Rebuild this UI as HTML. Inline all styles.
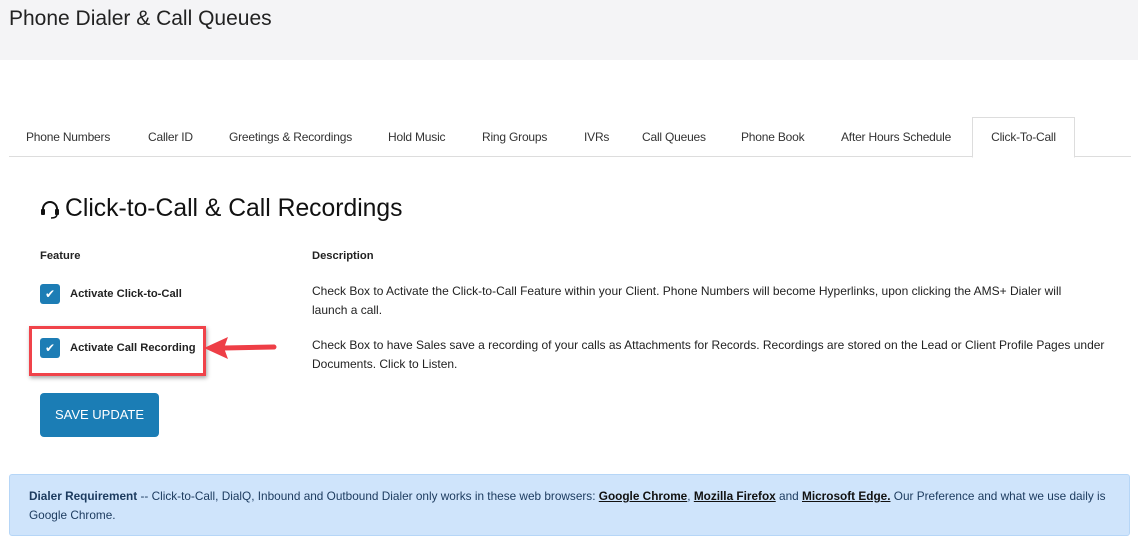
<!DOCTYPE html>
<html><head><style>
body{margin:0;width:1138px;height:547px;background:#fff;font-family:"Liberation Sans",sans-serif;color:#222;position:relative;overflow:hidden}
.hdr{position:absolute;left:0;top:0;width:1138px;height:60px;background:#f4f4f6}
.hdr h1{position:absolute;left:9px;top:7px;margin:0;font-weight:normal;font-size:21px;color:#222}
.tabs{position:absolute;left:9px;top:117px;width:1122px;height:39px;border-bottom:1px solid #ddd}
.tab{position:absolute;top:13px;font-size:12px;color:#333;letter-spacing:-0.2px}
.tab.act{top:0;height:39px;border:1px solid #ddd;border-bottom:1px solid #fff;background:#fff;line-height:39px;text-align:center;color:#333}
.t{position:absolute;font-size:12px;color:#222;white-space:nowrap}
.b{font-weight:bold}
.f{font-size:11.2px}
.cb{position:absolute;width:20px;height:20px;background:#1d7db5;border-radius:3px;color:#fff;font-size:12px;text-align:center;line-height:20px}
.btn{position:absolute;left:40px;top:393px;width:119px;height:44px;background:#1b7db5;border-radius:4px;color:#fff;font-size:13px;text-align:center;line-height:44px}
.alert{position:absolute;left:9px;top:474px;width:1121px;height:62px;background:#cfe4fb;border:1px solid #b6d6f7;border-radius:3px;box-sizing:border-box}
.alert .t{color:#1b3a5e;font-size:11.8px}
.alert u{font-weight:bold;color:#111}
</style></head><body>
<div class="hdr"><h1>Phone Dialer &amp; Call Queues</h1></div>
<div class="tabs">
<span class="tab" style="left:17px">Phone Numbers</span>
<span class="tab" style="left:139px">Caller ID</span>
<span class="tab" style="left:220px">Greetings &amp; Recordings</span>
<span class="tab" style="left:379px">Hold Music</span>
<span class="tab" style="left:473px">Ring Groups</span>
<span class="tab" style="left:575px">IVRs</span>
<span class="tab" style="left:633px">Call Queues</span>
<span class="tab" style="left:732px">Phone Book</span>
<span class="tab" style="left:832px">After Hours Schedule</span>
<span class="tab act" style="left:963px;width:101px">Click-To-Call</span>
</div>
<svg style="position:absolute;left:40px;top:200px" width="20" height="20" viewBox="0 0 20 20"><path d="M3 12 V9 a7 7 0 0 1 14 0 V12" fill="none" stroke="#111" stroke-width="2"/><rect x="1" y="9" width="4" height="6" rx="1" fill="#111"/><rect x="15" y="9" width="4" height="6" rx="1" fill="#111"/><path d="M17 14 q0 4 -6 4" fill="none" stroke="#111" stroke-width="1.5"/></svg>
<div class="t" style="left:65px;top:195px;font-size:24.7px;color:#111">Click-to-Call &amp; Call Recordings</div>
<div class="t b f" style="left:40px;top:250px">Feature</div>
<div class="t b f" style="left:312px;top:250px">Description</div>
<div class="cb" style="left:40px;top:284px">✔</div>
<div class="t b f" style="left:70px;top:288px">Activate Click-to-Call</div>
<div class="t" style="left:312px;top:282px;line-height:19px">Check Box to Activate the Click-to-Call Feature within your Client. Phone Numbers will become Hyperlinks, upon clicking the AMS+ Dialer will<br>launch a call.</div>
<div style="position:absolute;left:29px;top:326px;width:171px;height:44px;border:3px solid #f0434a;box-shadow:1px 2px 4px rgba(0,0,0,.35)"></div>
<div class="cb" style="left:40px;top:338px">✔</div>
<div class="t b f" style="left:70px;top:342px">Activate Call Recording</div>
<svg style="position:absolute;left:202px;top:334px" width="76" height="28" viewBox="0 0 76 28"><path d="M72 13 L22 14" stroke="#ee3e46" stroke-width="5" stroke-linecap="round"/><path d="M2 14 L26 3 L22 14 L26 25 Z" fill="#ee3e46"/></svg>
<div class="t" style="left:312px;top:336px;line-height:19px">Check Box to have Sales save a recording of your calls as Attachments for Records. Recordings are stored on the Lead or Client Profile Pages under<br>Documents. Click to Listen.</div>
<div class="btn">SAVE UPDATE</div>
<div class="alert"><div class="t" style="left:19px;top:12px;line-height:19px"><b>Dialer Requirement</b> -- Click-to-Call, DialQ, Inbound and Outbound Dialer only works in these web browsers: <u>Google Chrome</u>, <u>Mozilla Firefox</u> and <u>Microsoft Edge.</u> Our Preference and what we use daily is<br>Google Chrome.</div></div>
</body></html>
